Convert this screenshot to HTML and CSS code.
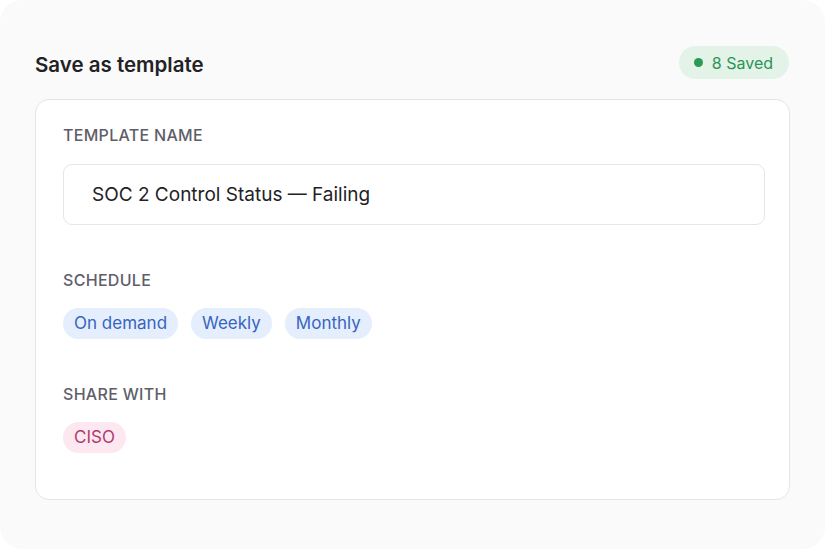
FILE: index.html
```html
<!DOCTYPE html>
<html lang="en">
<head>
    <meta charset="UTF-8">
    <meta name="viewport" content="width=device-width, initial-scale=1.0">
    <title>Save as template</title>
    <link rel="stylesheet" href="styles.css">
</head>
<body>
    <div class="frame">
        <div class="header">
            <h1 class="title">Save as template</h1>
            <div class="saved"><span class="dot"></span>8 Saved</div>
        </div>

        <div class="card">
            <div class="label">Template name</div>
            <div class="name-input">SOC 2 Control Status — Failing</div>

            <div class="label label-gap">Schedule</div>
            <div class="chips">
                <span class="chip">On demand</span>
                <span class="chip">Weekly</span>
                <span class="chip">Monthly</span>
            </div>

            <div class="label label-gap">Share with</div>
            <div class="chips">
                <span class="chip pink">CISO</span>
            </div>
        </div>
    </div>
</body>
</html>
```

FILE: styles.css
```css
* {
    box-sizing: border-box;
}
body {
    margin: 0;
    background: #ffffff;
    font-family: Inter, "Noto Sans", sans-serif;
    color: #1f1f24;
}
.frame {
    height: 549px;
    background: #fafafa;
    border-radius: 22px;
    padding: 46px 35px 0 35px;
}
.header {
    display: flex;
    align-items: center;
    justify-content: space-between;
    height: 33px;
    margin-bottom: 20px;
}
.title {
    margin: 0;
    padding-top: 3px;
    font-size: 20.5px;
    font-weight: 600;
    color: #222226;
}
.saved {
    display: flex;
    align-items: center;
    gap: 9px;
    height: 33px;
    padding: 0 16px 0 15px;
    margin-right: 1px;
    border-radius: 17px;
    background: #e3f3e8;
    color: #2c9457;
    font-size: 16px;
}
.dot {
    width: 9px;
    height: 9px;
    border-radius: 50%;
    background: #2a9a55;
}
.card {
    background: #ffffff;
    border: 1px solid #e5e5e7;
    border-radius: 14px;
    padding: 26px 24px 48px 27px;
    height: 401px;
}
.label {
    font-size: 16px;
    line-height: 18px;
    font-weight: 500;
    letter-spacing: 0.3px;
    text-transform: uppercase;
    color: #5e5e6a;
    margin-bottom: 20px;
}
.label-gap {
    margin-top: 46px;
    margin-bottom: 19px;
}
.name-input {
    height: 61px;
    border: 1px solid #e6e6e8;
    border-radius: 9px;
    display: flex;
    align-items: center;
    padding-left: 28px;
    font-size: 19px;
    color: #222226;
}
.chips {
    display: flex;
    gap: 13px;
}
.chip {
    height: 31px;
    line-height: 31px;
    padding: 0 11px;
    border-radius: 16px;
    background: #e5eefd;
    color: #3764c0;
    font-size: 17px;
}
.chip.pink {
    background: #fde8f1;
    color: #b23a6c;
}
```
